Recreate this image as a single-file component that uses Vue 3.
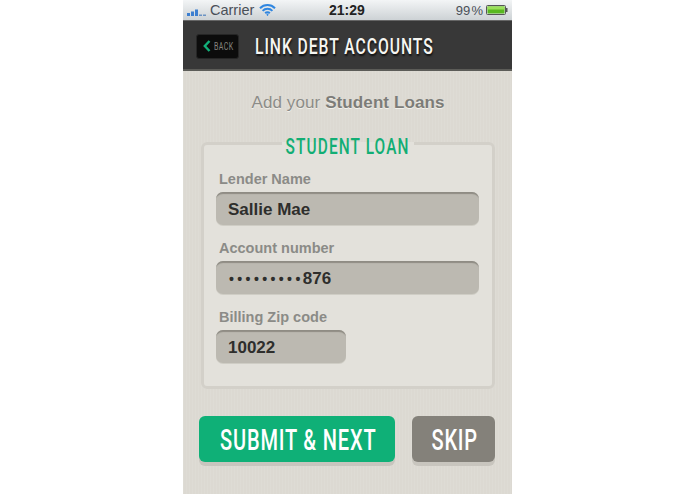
<template>
  <div class="page">
    <div class="phone">
      <div class="status-bar">
        <div class="status-left">
          <svg class="signal" width="20" height="8" viewBox="0 0 20 8">
            <rect x="0" y="5" width="3" height="3" fill="#3d7fd0"></rect>
            <rect x="4" y="3.5" width="3" height="4.5" fill="#3d7fd0"></rect>
            <rect x="8" y="1.5" width="3" height="6.5" fill="#3d7fd0"></rect>
            <rect x="12" y="6.5" width="3" height="1.5" fill="#6b93c4"></rect>
            <rect x="16" y="6.5" width="3" height="1.5" fill="#6b93c4"></rect>
          </svg>
          <span class="carrier">Carrier</span>
          <svg class="wifi" width="17" height="12" viewBox="0 0 17 12" fill="none" stroke="#2f86e0" stroke-width="2">
            <path d="M1 4.2a10.6 10.6 0 0 1 15 0"></path>
            <path d="M3.6 6.9a6.8 6.8 0 0 1 9.8 0"></path>
            <path d="M6.2 9.3a3.2 3.2 0 0 1 4.6 0"></path>
            <circle cx="8.5" cy="10.8" r="0.6" fill="#2f86e0" stroke-width="1"></circle>
          </svg>
        </div>
        <span class="clock">21:29</span>
        <div class="status-right">
          <span class="percent">99 %</span>
          <svg width="22" height="10" viewBox="0 0 22 10">
            <rect x="0.5" y="0.5" width="19" height="9" rx="1" fill="#dfe3e6" stroke="#555"></rect>
            <rect x="1.5" y="1.5" width="17" height="7" fill="#58b81f"></rect>
            <rect x="1.5" y="1.5" width="17" height="3" fill="#9be05a"></rect>
            <rect x="20" y="3" width="1.5" height="4" fill="#555"></rect>
          </svg>
        </div>
      </div>

      <div class="nav-bar">
        <button class="back-btn">
          <svg width="8" height="12" viewBox="0 0 8 12" fill="none" stroke="#12b07a" stroke-width="2.4">
            <polyline points="6.5 1 1.8 6 6.5 11"></polyline>
          </svg>
          <span>BACK</span>
        </button>
        <h1>LINK DEBT ACCOUNTS</h1>
      </div>

      <div class="content">
        <p class="intro">Add your <b>Student Loans</b></p>

        <fieldset class="loan-box">
          <legend><span>STUDENT LOAN</span></legend>
          <div v-for="field in fields" :key="field.label" class="field">
            <label>{{ field.label }}</label>
            <div class="input" :class="{ short: field.short }">
              <span v-if="field.dots" class="dots">{{ field.dots }}</span>{{ field.value }}
            </div>
          </div>
        </fieldset>

        <div class="actions">
          <button class="submit-btn"><span>SUBMIT &amp; NEXT</span></button>
          <button class="skip-btn"><span>SKIP</span></button>
        </div>
      </div>
    </div>
  </div>
</template>

<script setup>
const fields = [
  { label: 'Lender Name', value: 'Sallie Mae' },
  { label: 'Account number', value: '876', dots: '•••••••••' },
  { label: 'Billing Zip code', value: '10022', short: true }
];
</script>

<style>
html, body { margin: 0; background: #fff; }
</style>

<style scoped>
.page { width: 695px; height: 494px; overflow: hidden; background: #fff; display: flex; justify-content: center; font-family: "Liberation Sans", Arial, sans-serif; }
.phone { width: 329px; display: flex; flex-direction: column; }
.status-bar { height: 20px; flex-shrink: 0; box-sizing: border-box; padding: 0 4px 0 4px; display: flex; align-items: center; justify-content: space-between; position: relative; background: linear-gradient(#f3f5f6, #cdd2d5); font-size: 14.5px; }
.status-left { display: flex; align-items: center; gap: 3px; }
.signal { margin-top: 3px; }
.carrier { color: #4a5058; }
.wifi { margin-left: 2px; }
.clock { position: absolute; left: 146px; font-weight: bold; color: #222; font-size: 14px; }
.status-right { display: flex; align-items: center; gap: 3px; }
.percent { font-size: 13px; word-spacing: -2.5px; color: #4a5058; }

.nav-bar { height: 51px; flex-shrink: 0; box-sizing: border-box; padding: 2px 13px 0; display: flex; align-items: center; gap: 16px; background: #383838; border-top: 1px solid #666; border-bottom: 2px solid #5c5c58; }
.back-btn { width: 43px; height: 25px; flex-shrink: 0; padding: 0 0 0 6px; display: flex; align-items: center; gap: 3px; background: #0c0c0c; border: 1px solid #262626; border-radius: 3px; box-sizing: border-box; }
.back-btn svg { flex-shrink: 0; }
.back-btn span { flex-shrink: 0; font-family: Roboto, sans-serif; font-size: 11px; letter-spacing: 0.6px; color: #85857f; transform: scaleX(0.64); transform-origin: left center; }
h1 { margin: 0; flex-shrink: 0; font-family: Roboto, sans-serif; font-size: 22px; font-weight: 500; letter-spacing: 1.3px; color: #f6f6f2; text-shadow: 1px 2px 2px #111; white-space: nowrap; transform: scaleX(0.715); transform-origin: left center; }

.content { flex: 1; padding: 0 17px 0 18px; background: #dcd9d2 repeating-linear-gradient(90deg, rgba(255,255,255,0.07) 0 1px, transparent 1px 3px); display: flex; flex-direction: column; }
.intro { margin: 22px 0 0; text-align: center; font-size: 17px; line-height: 20px; letter-spacing: 0.1px; color: #8c8c88; text-shadow: 0 1px 0 #f2f0ea; }
.intro b { color: #7c7c78; }

.loan-box { margin: 18px 0 0; padding: 0 13px 0 12px; height: 258px; box-sizing: border-box; border: 3px solid #d3d0c9; border-radius: 6px; background: #e3e1db; min-width: 0; }
legend { margin: 0 auto; padding: 0; width: 132px; height: 24px; display: flex; justify-content: center; align-items: center; }
legend span { flex-shrink: 0; font-family: Roboto, sans-serif; font-size: 22px; font-weight: 500; letter-spacing: 1.6px; white-space: nowrap; color: #12ae74; transform: translateY(3px) scaleX(0.7); }

.field { display: flex; flex-direction: column; margin-bottom: 13px; }
.field:first-of-type { margin-top: 14px; }
label { padding-left: 3px; font-size: 14.5px; font-weight: bold; line-height: 20px; color: #8b8b87; margin-bottom: 3px; }
.input { height: 33px; box-sizing: border-box; padding: 3px 0 0 12px; display: flex; align-items: center; font-size: 17px; font-weight: bold; color: #2e2e2c; background: #bcb9b1; border-radius: 7px; box-shadow: inset 0 3px 1px -1px #8f8c84, 0 1px 0 #cfcdc5; }
.input.short { width: 130px; }
.dots { font-size: 14px; letter-spacing: 3.4px; margin-left: 1px; margin-right: -1px; }

.actions { margin-top: 27px; display: flex; gap: 17px; margin-left: -2px; }
button { cursor: pointer; }
.submit-btn, .skip-btn { height: 46px; border: none; border-radius: 6px; color: #fff; padding: 0 0 0 3px; display: flex; align-items: center; justify-content: center; box-shadow: 0 4px 0 #c8c5be; }
.submit-btn span, .skip-btn span { flex-shrink: 0; font-family: Roboto, sans-serif; font-size: 29px; font-weight: 500; letter-spacing: 1.2px; white-space: nowrap; transform: translateY(1px) scaleX(0.69); }
.submit-btn { width: 196px; background: #0fb077; }
.skip-btn { width: 83px; background: #84817a; }
</style>
